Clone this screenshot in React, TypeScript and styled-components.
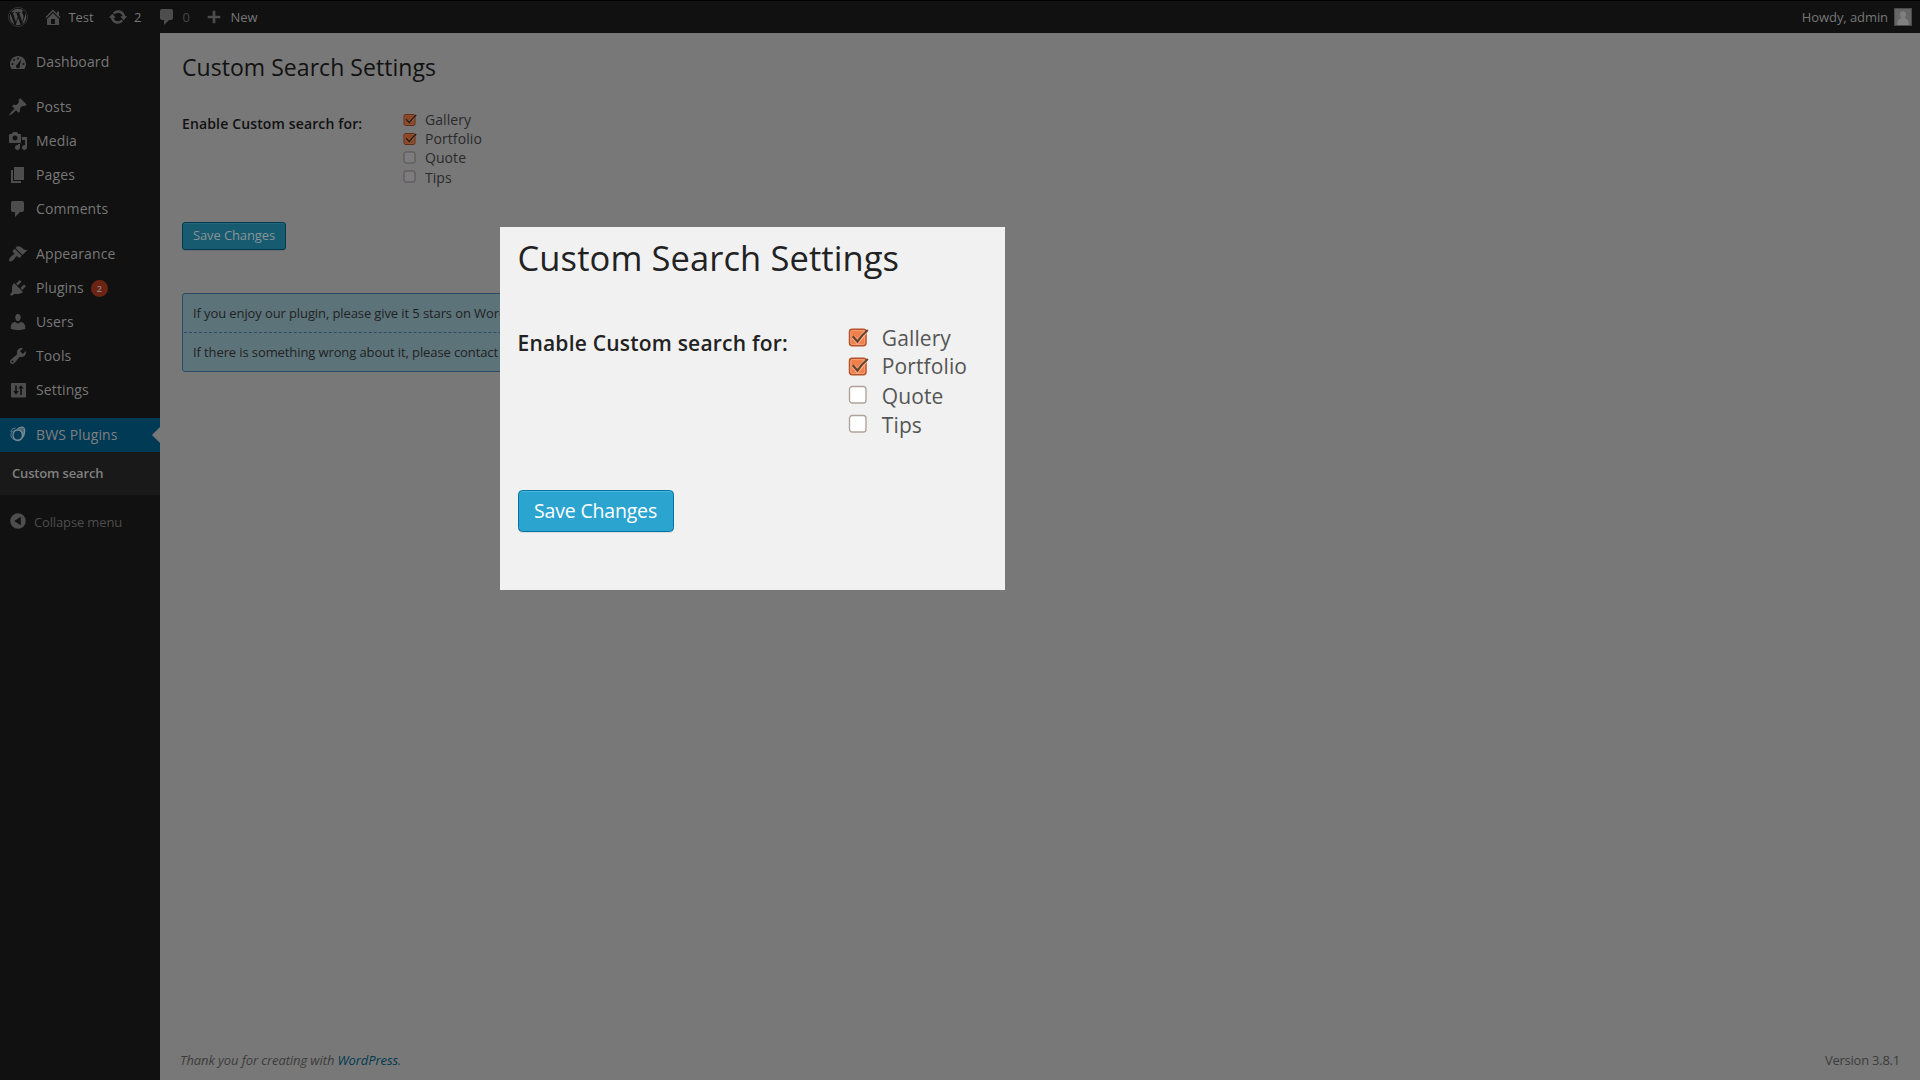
import React from "react";
import styled, { createGlobalStyle } from "styled-components";
import { FaWordpress } from "react-icons/fa";

const Global = createGlobalStyle`
  *, *::before, *::after { box-sizing: border-box; }
  body { margin: 0; background: #787878; font-family: "Open Sans", "Noto Sans", sans-serif; font-size: 14px; overflow: hidden; }
`;

const Screen = styled.div`
  display: flex;
  flex-direction: column;
  height: 1080px;
  width: 1920px;
`;

const AdminBar = styled.header`
  display: flex;
  align-items: center;
  height: 33px;
  flex: none;
  background: #111;
  border-top: 1px solid #000;
  padding: 0 8px;
  font-size: 13px;
  letter-spacing: -0.08px;
  color: #777;
`;

const BarItem = styled.div<{ $w?: number; $gap?: number; $dim?: boolean }>`
  display: flex;
  align-items: center;
  height: 30px;
  width: ${(p) => (p.$w ? `${p.$w}px` : "auto")};
  gap: ${(p) => p.$gap ?? 5.5}px;
  color: ${(p) => (p.$dim ? "#474747" : "#777")};
  white-space: nowrap;
  svg { color: #4d4d4d; flex: none; }
`;

const Account = styled(BarItem)`
  margin-left: auto;
`;

const Avatar = styled.svg`
  border: 1px solid #4a4a4a;
  background: #666;
`;

const Body = styled.div`
  display: flex;
  flex: 1;
  min-height: 0;
`;

const Sidebar = styled.nav`
  width: 160px;
  flex: none;
  background: #111;
  padding-top: 12px;
`;

const MenuItem = styled.div<{ $active?: boolean }>`
  display: flex;
  align-items: center;
  height: 34px;
  padding-left: 8px;
  position: relative;
  color: ${(p) => (p.$active ? "#808080" : "#777")};
  background: ${(p) => (p.$active ? "#003a55" : "transparent")};
  svg { color: ${(p) => (p.$active ? "#7b8a92" : "#4d4d4d")}; flex: none; margin-right: 8px; }
`;

const Label = styled.span`
  padding-bottom: 2px;
  letter-spacing: 0.12px;
`;

const Pointer = styled.span`
  position: absolute;
  right: 0;
  top: 9px;
  border: 8px solid transparent;
  border-left-width: 0;
  border-right-color: #787878;
`;

const Separator = styled.div`
  height: 11px;
`;

const Badge = styled.span`
  display: flex;
  align-items: center;
  justify-content: center;
  width: 17px;
  height: 17px;
  margin: 0 0 0 7px;
  border-radius: 50%;
  background: #6b2413;
  color: #898280;
  font-size: 9px;
  font-weight: 600;
`;

const Submenu = styled.div`
  height: 43px;
  padding: 0 12px 2px;
  display: flex;
  align-items: center;
  background: #191919;
  color: #808080;
  font-size: 13px;
  font-weight: 600;
  letter-spacing: -0.16px;
`;

const Collapse = styled.div`
  display: flex;
  align-items: center;
  gap: 6px;
  height: 34px;
  margin-top: 10px;
  padding-left: 8px;
  font-size: 13px;
  letter-spacing: -0.14px;
  color: #4d4d4d;
  svg { margin-bottom: 2px; }
`;

const Content = styled.main`
  flex: 1;
  display: flex;
  flex-direction: column;
  padding: 18px 20px 0 22px;
`;

const Title = styled.h2<{ $k: number }>`
  margin: 0;
  font-weight: 400;
  font-size: ${(p) => 23 * p.$k}px;
  line-height: ${(p) => 32 * p.$k}px;
  letter-spacing: ${(p) => (p.$k > 1 ? 0.1 : 0.05)}px;
  color: ${(p) => (p.$k > 1 ? "#222" : "#111")};
  white-space: nowrap;
`;

const FormRow = styled.div<{ $k: number }>`
  display: grid;
  grid-template-columns: ${(p) => 220.5 * p.$k}px auto;
  margin-top: ${(p) => (p.$k > 1 ? 41.5 : 27)}px;
  line-height: ${(p) => 19 * p.$k}px;
  font-size: ${(p) => 14 * p.$k}px;
`;

const FieldName = styled.div<{ $k: number }>`
  padding-top: ${(p) => (p.$k > 1 ? 5.5 : 4)}px;
  font-weight: 600;
  letter-spacing: ${(p) => 0.14 * p.$k}px;
  color: ${(p) => (p.$k > 1 ? "#222" : "#111")};
`;

const Options = styled.div`
  display: flex;
  flex-direction: column;
`;

const Option = styled.label<{ $k: number }>`
  display: flex;
  align-items: center;
  height: ${(p) => 19.2 * p.$k}px;
  gap: ${(p) => 7.4 * p.$k}px;
  color: ${(p) => (p.$k > 1 ? "#555" : "#2a2a2a")};
`;

const OptionName = styled.span<{ $drop: number }>`
  padding-top: ${(p) => p.$drop}px;
  letter-spacing: 0.1px;
`;

const SaveButton = styled.button<{ $k: number }>`
  align-self: flex-start;
  margin: ${(p) => (p.$k > 1 ? 51.5 : 35)}px 0 0;
  padding: 0;
  width: ${(p) => (p.$k > 1 ? 156 : 104)}px;
  height: ${(p) => (p.$k > 1 ? 42 : 28)}px;
  font-family: inherit;
  font-size: ${(p) => 13 * p.$k}px;
  letter-spacing: ${(p) => -0.12 * p.$k}px;
  line-height: 1;
  color: ${(p) => (p.$k > 1 ? "#fff" : "#8a9396")};
  background: ${(p) => (p.$k > 1 ? "#2ba5d0" : "#175b70")};
  border: ${(p) => (p.$k > 1 ? 1.5 : 1)}px solid ${(p) => (p.$k > 1 ? "#0074a2" : "#003a51")};
  border-radius: ${(p) => 3 * p.$k}px;
  box-shadow: 0 1px 0 ${(p) => (p.$k > 1 ? "#dcdcdc" : "#6c6c6c")}, inset 0 1px 0 ${(p) => (p.$k > 1 ? "#4cb8dd" : "#23677b")};
`;

const Notice = styled.div`
  margin-top: 43px;
  width: 600px;
  height: 79px;
  border: 1px solid #2c4b63;
  border-radius: 3px;
  background: #5c737a;
  color: #222;
  font-size: 13px;
  letter-spacing: -0.105px;
`;

const NoticeLine = styled.div<{ $divided?: boolean }>`
  display: flex;
  align-items: center;
  height: 39px;
  margin-left: 1px;
  padding-left: 9px;
  border-bottom: ${(p) => (p.$divided ? "1px dashed #2c4b6b" : "none")};
  white-space: nowrap;
`;

const Footer = styled.footer`
  display: flex;
  justify-content: space-between;
  margin: auto 0 10px -2px;
  line-height: 20px;
  font-size: 13px;
  letter-spacing: -0.1px;
  color: #3c3c3c;
`;

const Version = styled.span`
  letter-spacing: -0.24px;
`;

const Link = styled.span`
  color: #003a51;
`;

const Modal = styled.section`
  position: absolute;
  left: 500px;
  top: 227px;
  width: 505px;
  height: 363px;
  padding: 7px 0 0 17.5px;
  background: #f1f1f1;
  display: flex;
  flex-direction: column;
`;

const paths: Record<string, string> = {
  home: "M16 8.5l1.53 1.53-1.06 1.06L10 4.6l-6.47 6.49-1.06-1.06L10 2.5l4 4v-2h2v4zm-6-2.46l6 5.99V18H4v-5.97zM12 17v-5H8v5h4z",
  update: "M10.2 3.28c3.53 0 6.43 2.61 6.92 6h2.08l-3.5 4-3.5-4h2.32c-.45-1.97-2.21-3.45-4.32-3.45-1.45 0-2.73.71-3.54 1.78L4.95 5.66C6.23 4.2 8.11 3.28 10.2 3.28zm-.4 13.44c-3.52 0-6.43-2.61-6.92-6H.8l3.5-4c1.17 1.33 2.33 2.67 3.5 4H5.48c.45 1.97 2.21 3.45 4.32 3.45 1.45 0 2.73-.71 3.54-1.78l1.71 1.95c-1.28 1.46-3.15 2.38-5.25 2.38z",
  comment: "M5 2h9c1.1 0 2 .9 2 2v7c0 1.1-.9 2-2 2h-2l-5 5v-5H5c-1.1 0-2-.9-2-2V4c0-1.1.9-2 2-2z",
  plus: "M17 8.5v3h-5.5v5.5h-3v-5.5H3v-3h5.5V3h3v5.5z",
  post: "M10.44 3.02l1.82-1.82 6.36 6.35-1.83 1.82c-1.05-.68-2.48-.57-3.41.36l-.75.75c-.92.93-1.04 2.35-.35 3.41l-1.83 1.82-2.41-2.41-2.8 2.79c-.42.42-3.38 2.71-3.8 2.29s1.86-3.39 2.28-3.81l2.79-2.79L4.1 9.36l1.83-1.82c1.05.69 2.48.57 3.4-.36l.75-.75c.93-.92 1.05-2.35.36-3.41z",
  media: "M13 11V4c0-.55-.45-1-1-1h-1.67L9 1H5L3.67 3H2c-.55 0-1 .45-1 1v7c0 .55.45 1 1 1h10c.55 0 1-.45 1-1zM7 4.5c1.38 0 2.5 1.12 2.5 2.5S8.38 9.5 7 9.5 4.5 8.38 4.5 7 5.62 4.5 7 4.5zM14 6h5v10.5c0 1.38-1.12 2.5-2.5 2.5S14 17.88 14 16.5s1.12-2.5 2.5-2.5c.17 0 .34.02.5.05V9h-3V6zm-4 8.05V13h2v3.5c0 1.38-1.12 2.5-2.5 2.5S7 17.88 7 16.5 8.12 14 9.5 14c.17 0 .34.02.5.05z",
  page: "M6 15V2h10v13H6zm-1 1h8v2H3V5h2v11z",
  appearance: "M14.48 11.06L7.41 3.99l1.5-1.5c.5-.56 2.3-.47 3.51.32 1.21.8 1.43 1.28 2.91 2.1 1.18.64 2.45 1.26 4.45.85zm-.71.71L6.7 4.7 4.93 6.47c-.39.39-.39 1.02 0 1.41l1.06 1.06c.39.39.39 1.03 0 1.42-.6.6-1.43 1.11-2.21 1.69-.35.26-.7.53-1.01.84C1.43 14.23.4 16.08 1.4 17.07c.99 1 2.84-.03 4.18-1.36.31-.31.58-.66.85-1.02.57-.78 1.08-1.61 1.69-2.21.39-.39 1.02-.39 1.41 0l1.06 1.06c.39.39 1.02.39 1.41 0z",
  plugins: "M13.11 4.36L9.87 7.6 8 5.73l3.24-3.24c.35-.34 1.05-.2 1.56.32.52.51.66 1.21.31 1.55zm-8 1.77l.91-1.12 9.01 9.01-1.19.84c-.71.71-2.63 1.16-3.82 1.16H6.14L4.9 17.26c-.59.59-1.54.59-2.12 0-.59-.58-.59-1.53 0-2.12l1.24-1.24v-3.88c0-1.13.4-3.19 1.09-3.89zm7.26 3.97l3.24-3.24c.34-.35 1.04-.21 1.55.31.52.51.66 1.21.31 1.55l-3.24 3.25z",
  users: "M10 9.25c-2.27 0-2.73-3.44-2.73-3.44C7 4.02 7.82 2 9.97 2c2.16 0 2.98 2.02 2.71 3.81 0 0-.41 3.44-2.68 3.44zm0 2.57L12.72 10c2.39 0 4.52 2.33 4.52 4.53v2.49s-3.65 1.13-7.24 1.13c-3.65 0-7.24-1.13-7.24-1.13v-2.49c0-2.25 1.94-4.48 4.47-4.48z",
  tools: "M16.68 9.77c-1.34 1.34-3.3 1.67-4.95.99l-5.41 6.52c-.99.99-2.59.99-3.58 0s-.99-2.59 0-3.57l6.52-5.42c-.68-1.65-.35-3.61.99-4.95 1.28-1.28 3.12-1.62 4.72-1.06l-2.89 2.89 2.82 2.82 2.86-2.87c.53 1.58.18 3.39-1.08 4.65zM3.81 16.21c.4.39 1.04.39 1.43 0 .4-.4.4-1.04 0-1.43-.39-.4-1.03-.4-1.43 0-.39.39-.39 1.03 0 1.43z",
  settings: "M18 16.5V4c0-.55-.45-1-1-1H4c-.55 0-1 .45-1 1v12.5c0 .55.45 1 1 1h13c.55 0 1-.45 1-1zM7.2 5.5h1.6v5.5h2L8 14.8 5.2 11h2zM12.2 15V8.5h-2L13 5.2l2.8 3.3h-2V15z",
  dashboard: "M3.76 17h12.48C17.34 15.63 18 13.88 18 12c0-4.41-3.58-8-8-8s-8 3.59-8 8c0 1.88.66 3.63 1.76 5zM10 5.5a1 1 0 1 1 0 2 1 1 0 0 1 0-2zM6 7a1 1 0 1 1 0 2 1 1 0 0 1 0-2zM13.5 7l-1.7 6.3a2 2 0 1 1-2.3-1zM4.5 11a1 1 0 1 1 0 2 1 1 0 0 1 0-2zM15.5 11a1 1 0 1 1 0 2 1 1 0 0 1 0-2z",
  collapse: "M10 2.2a7.8 7.8 0 1 0 0 15.6 7.8 7.8 0 0 0 0-15.6zM12.8 5.8v8.4L6.2 10z",
};

const Glyph = ({ name, size = 20 }: { name: string; size?: number }) => (
  <svg width={size} height={size} viewBox="0 0 20 20" fill="currentColor" fillRule="evenodd">
    <path d={paths[name]} />
  </svg>
);

const BwsGlyph = () => (
  <svg width="20" height="20" viewBox="0 2 20 20" fill="none" stroke="currentColor">
    <ellipse cx="9.8" cy="12.2" rx="4.8" ry="5.4" strokeWidth="1.3" />
    <ellipse cx="9" cy="12" rx="6.2" ry="5" strokeWidth=".8" />
    <path d="M9.5 6.2c1.5-2.200 5-2.600 6.500-1 1.500 2 .5 7.500-2 10" strokeWidth="1.200" />
    <path d="M11 6c2.500-2 5-1 5 2 0 2.500-.7 4-1.800 5.500.2-3.500-.7-6-3.200-7.500z" fill="currentColor" fillOpacity=".55" strokeWidth=".6" />
    <path d="M3 9c0-2 1.500-3.800 4.500-4" strokeWidth=".9" />
  </svg>
);

const CheckGlyph = ({ checked, k }: { checked: boolean; k: number }) => {
  const lit = k > 1;
  return (
    <svg width={15 * k} height={14 * k} viewBox="0 0 15 14">
      {checked ? (
        <>
          <rect x="1" y="1.5" width="11" height="11" rx="1.8" fill={lit ? "#f07f4b" : "#8d4726"} stroke={lit ? "#b5532a" : "#5e2b14"} />
          <rect x="1.9" y="2.4" width="9.2" height="9.2" rx="1" fill="none" stroke={lit ? "#f7a47c" : "#965638"} strokeWidth=".6" />
          <path d="M3.6 6.6l2.7 3.3L12 3" fill="none" stroke={lit ? "#f4b393" : "#8e6048"} strokeWidth="2.6" />
          <path d="M3.2 6.2l3.1 3.5Q9 5.5 13.2 2" fill="none" stroke={lit ? "#6b432c" : "#2c1a12"} strokeWidth="1.5" />
        </>
      ) : (
        <rect x="1" y="1" width="11" height="11" rx="1.9" fill={lit ? "#fff" : "#7f7c7f"} stroke={lit ? "#aea29b" : "#514e4d"} strokeWidth=".9" />
      )}
    </svg>
  );
};

const options: [string, boolean][] = [
  ["Gallery", true],
  ["Portfolio", true],
  ["Quote", false],
  ["Tips", false],
];

const SettingsForm = ({ k }: { k: number }) => (
  <>
    <Title $k={k}>Custom Search Settings</Title>
    <FormRow $k={k}>
      <FieldName $k={k}>Enable Custom search for:</FieldName>
      <Options>
        {options.map(([name, checked]) => (
          <Option key={name} $k={k}>
            <CheckGlyph checked={checked} k={k} />
            <OptionName $drop={!checked && k > 1 ? 2 : 0}>{name}</OptionName>
          </Option>
        ))}
      </Options>
    </FormRow>
    <SaveButton $k={k}>Save Changes</SaveButton>
  </>
);

const Item = ({ icon, text, children }: { icon: string; text: string; children?: React.ReactNode }) => (
  <MenuItem>
    <Glyph name={icon} />
    <Label>{text}</Label>
    {children}
  </MenuItem>
);

export default function App() {
  return (
    <>
      <Global />
      <Screen>
        <AdminBar>
          <BarItem $w={35}><FaWordpress size={20} /></BarItem>
          <BarItem $w={65}><Glyph name="home" />Test</BarItem>
          <BarItem $w={49} $gap={6}><Glyph name="update" />2</BarItem>
          <BarItem $w={48} $dim><Glyph name="comment" />0</BarItem>
          <BarItem $gap={7.5}><Glyph name="plus" size={18} />New</BarItem>
          <Account $gap={6}>
            Howdy, admin
            <Avatar width="18" height="18" viewBox="0 0 16 16">
              <path d="M8 2.2c2 0 3 1.3 3 3S10 8.5 9.8 9c2.5.6 4 2.8 4 7H2.2c0-4.2 1.5-6.4 4-7C6 8.5 5 6.9 5 5.2s1-3 3-3z" fill="#808080" />
            </Avatar>
          </Account>
        </AdminBar>
        <Body>
          <Sidebar>
            <Item icon="dashboard" text="Dashboard" />
            <Separator />
            <Item icon="post" text="Posts" />
            <Item icon="media" text="Media" />
            <Item icon="page" text="Pages" />
            <Item icon="comment" text="Comments" />
            <Separator />
            <Item icon="appearance" text="Appearance" />
            <Item icon="plugins" text="Plugins"><Badge>2</Badge></Item>
            <Item icon="users" text="Users" />
            <Item icon="tools" text="Tools" />
            <Item icon="settings" text="Settings" />
            <Separator />
            <MenuItem $active>
              <BwsGlyph />
              <Label>BWS Plugins</Label>
              <Pointer />
            </MenuItem>
            <Submenu>Custom search</Submenu>
            <Collapse><Glyph name="collapse" />Collapse menu</Collapse>
          </Sidebar>
          <Content>
            <SettingsForm k={1} />
            <Notice>
              <NoticeLine $divided>If you enjoy our plugin, please give it 5 stars on WordPress</NoticeLine>
              <NoticeLine>If there is something wrong about it, please contact us</NoticeLine>
            </Notice>
            <Footer>
              <i>Thank you for creating with <Link>WordPress</Link>.</i>
              <Version>Version 3.8.1</Version>
            </Footer>
          </Content>
        </Body>
        <Modal>
          <SettingsForm k={1.5} />
        </Modal>
      </Screen>
    </>
  );
}
